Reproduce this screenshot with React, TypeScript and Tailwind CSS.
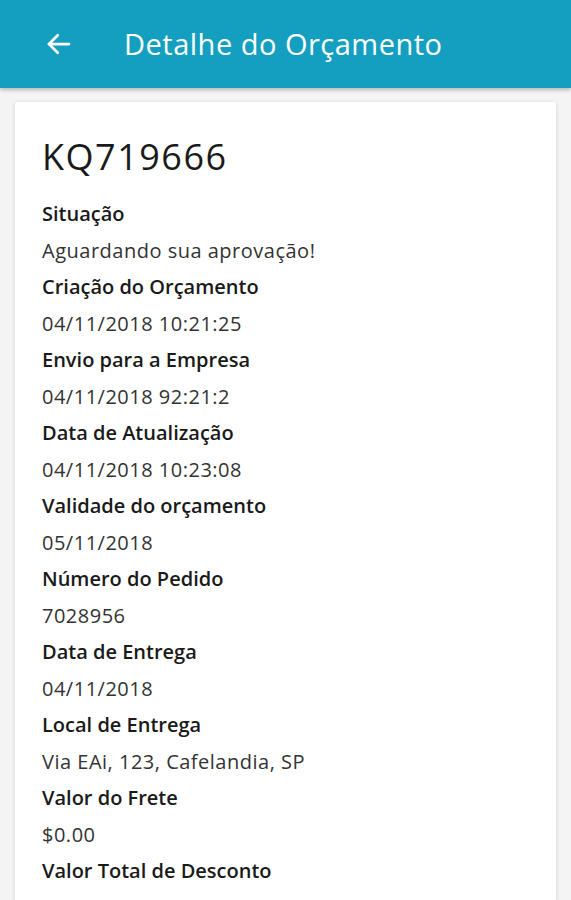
import React from 'react';

type Field = {
    label: string;
    value: string;
};

const fields: Field[] = [
    {label: 'Situação', value: 'Aguardando sua aprovação!'},
    {label: 'Criação do Orçamento', value: '04/11/2018 10:21:25'},
    {label: 'Envio para a Empresa', value: '04/11/2018 92:21:2'},
    {label: 'Data de Atualização', value: '04/11/2018 10:23:08'},
    {label: 'Validade do orçamento', value: '05/11/2018'},
    {label: 'Número do Pedido', value: '7028956'},
    {label: 'Data de Entrega', value: '04/11/2018'},
    {label: 'Local de Entrega', value: 'Via EAi, 123, Cafelandia, SP'},
    {label: 'Valor do Frete', value: '$0.00'},
    {label: 'Valor Total de Desconto', value: '$100.00'},
];

const App = () => {
    return (
        <div className="min-h-screen bg-[#f4f4f4] font-['Open_Sans','Lato',sans-serif]">
            <header className="flex h-[88px] items-center bg-[#149fc1] px-[44px] shadow-[0_2px_4px_rgba(0,0,0,0.25)]">
                <svg width="30" height="30" viewBox="0 0 24 24" fill="none" stroke="white" strokeWidth="2.2"
                     strokeLinecap="round" strokeLinejoin="round">
                    <path d="M20 12H4"/>
                    <path d="M11 5l-7 7 7 7"/>
                </svg>
                <h1 className="ml-[50px] text-[29px] font-normal tracking-[0.5px] text-white">
                    Detalhe do Orçamento
                </h1>
            </header>
            <main className="px-[15px] pt-[14px]">
                <div className="h-[800px] rounded-[2px] bg-white px-[27px] pt-[30px] shadow-[0_1px_4px_rgba(0,0,0,0.15)]">
                    <div className="mb-[14px] text-[36px] leading-[50px] font-normal tracking-[1.5px] text-[#1a1a1a]">KQ719666</div>
                    {fields.map((field, index) => (
                        <div key={index}>
                            <div className="text-[20px] leading-[36.5px] font-semibold text-[#1a1a1a]">{field.label}</div>
                            <div className="text-[20px] leading-[36.5px] font-normal tracking-[0.5px] text-[#333]">{field.value}</div>
                        </div>
                    ))}
                </div>
            </main>
        </div>
    );
};

export default App;
